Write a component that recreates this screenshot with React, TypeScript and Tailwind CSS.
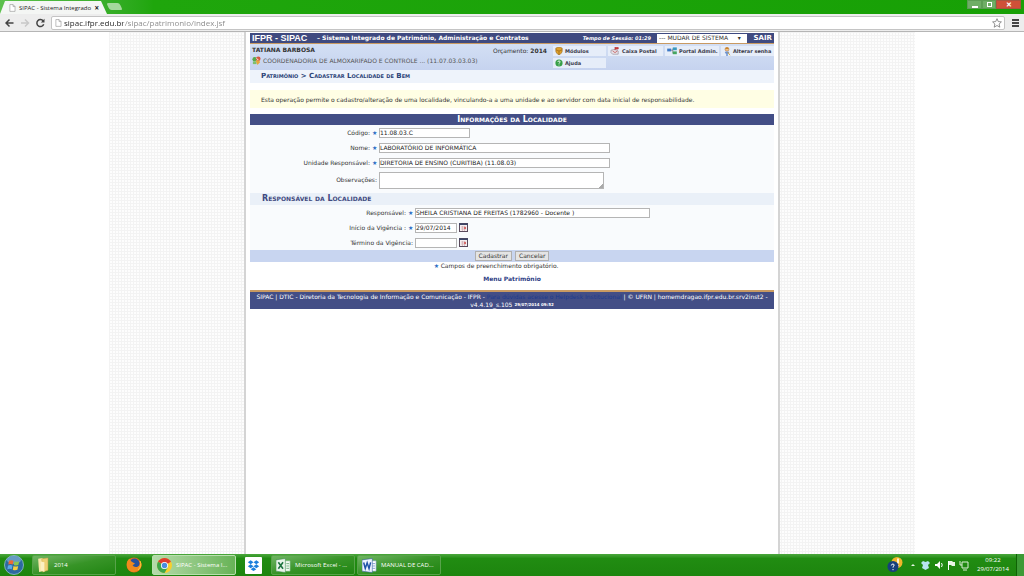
import type { ReactNode } from "react";

const Page = () => (
  <svg viewBox="0 0 8 10" className="h-2 w-[7px] shrink-0" fill="#fff" stroke="#999" strokeWidth="0.8">
    <path d="M.7.7h4l2.5 2.5v6H.7zM4.7.7v2.5h2.5" />
  </svg>
);

const Required = () => <span className="mx-[2px] w-[5px] text-center text-[6px] leading-[8px] text-[#2f6fc4]">★</span>;

const Calendar = () => (
  <svg viewBox="0 0 9 9" className="h-[9px] w-[9px]">
    <rect x="0.5" y="0.5" width="8" height="8" fill="#f6eef0" stroke="#5a4a5c" />
    <path d="M0 1.2h9" stroke="#3c4668" strokeWidth="1.6" />
    <path d="M2 4h5M2 6h5M3.5 3v5M5.5 3v5" stroke="#c9a3a8" strokeWidth="0.6" />
    <path d="M5 4h2v2H5z" fill="#d86a6a" />
  </svg>
);

const ShieldIcon = () => (
  <svg viewBox="0 0 10 10" className="h-2 w-2 shrink-0">
    <path d="M5 0l4 1.3v4Q9 8 5 10 1 8 1 5.300v-4z" fill="#e0a12a" stroke="#8a5b14" strokeWidth="0.6" />
    <path d="M1 3.500l4 1.500 4-1.500M5 5v5" stroke="#8a5b14" fill="none" strokeWidth="0.7" />
  </svg>
);
const MailIcon = () => (
  <svg viewBox="0 0 12 10" className="h-2 w-[10px] shrink-0">
    <path d="M1 4l5-1 4 2v4H3L1 7z" fill="#e8e4ea" stroke="#8a7d88" strokeWidth="0.7" />
    <path d="M6 0v4M6 .5h4v2H6" fill="#d9383a" stroke="#b33636" strokeWidth="0.9" />
    <path d="M3 5l3 2 3-2" fill="none" stroke="#c24747" strokeWidth="0.9" />
  </svg>
);
const PortalIcon = () => (
  <svg viewBox="0 0 12 10" className="h-2 w-[10px] shrink-0">
    <path d="M4 4h3M7 2v6" stroke="#666" strokeWidth="0.8" />
    <rect x="0" y="2" width="5" height="3.500" fill="#3d79c6" />
    <rect x="7" y="0.500" width="5" height="3.500" fill="#3a9ac0" />
    <rect x="7" y="5.500" width="5" height="3.500" fill="#45a560" />
  </svg>
);
const KeyUserIcon = () => (
  <svg viewBox="0 0 10 12" className="h-[9px] w-2 shrink-0">
    <circle cx="5" cy="3" r="2.600" fill="#f0c28a" stroke="#b7702a" strokeWidth="0.7" />
    <path d="M2.500 2.500Q5-1 7.500 2.500" fill="#c98428" />
    <path d="M3 6h4l1 2-2 1v3H4V9L2 8z" fill="#6e93cf" />
    <path d="M6 7l3 4" stroke="#d6a32d" strokeWidth="1.200" />
  </svg>
);
const HelpIcon = () => (
  <svg viewBox="0 0 10 10" className="h-2 w-2 shrink-0">
    <circle cx="5" cy="5" r="4.500" fill="#38a048" />
    <path d="M3.500 3.800Q3.700 2.300 5.100 2.400 6.800 2.600 6.300 4 5.900 4.700 5 5.200v.8M5 7v1" fill="none" stroke="#fff" strokeWidth="1.100" />
  </svg>
);
const UnitIcon = () => (
  <svg viewBox="0 0 10 10" className="h-[9px] w-[9px] shrink-0">
    <circle cx="3" cy="3.500" r="2.500" fill="#58a84c" />
    <circle cx="7" cy="3" r="2.500" fill="#d8573d" />
    <path d="M1 6h4v3H1z" fill="#7fbf6d" />
    <path d="M4 5h4l1 2-3 3z" fill="#e8a53a" />
    <path d="M5 2.500l2 2" stroke="#fff" />
  </svg>
);

const FolderIcon = () => (
  <svg viewBox="0 0 14 18" className="h-4 w-[13px] shrink-0">
    <path d="M1 2l5-1v15l-4 1z" fill="#f7e7a8" />
    <path d="M5 2l7-1v14l-6 2z" fill="#edcf73" stroke="#c9a546" strokeWidth="0.500" />
    <path d="M4 5l4 1v11l-4-2z" fill="#fbf0c2" />
  </svg>
);
const ChromeIcon = () => (
  <svg viewBox="0 0 16 16" className="h-[15px] w-[15px] shrink-0">
    <circle cx="8" cy="8" r="8" fill="#f6cf2f" />
    <path d="M8 8L1.100 4A8 8 0 0 1 14.900 4z" fill="#df3e30" />
    <path d="M8 8L1.100 4A8 8 0 0 0 8 16l3.500-6z" fill="#3da64b" />
    <circle cx="8" cy="8" r="3.800" fill="#fff" />
    <circle cx="8" cy="8" r="2.900" fill="#4a8de0" />
  </svg>
);
const FirefoxIcon = () => (
  <svg viewBox="0 0 16 16" className="h-4 w-4">
    <circle cx="8" cy="8" r="7.500" fill="#e2691b" />
    <circle cx="8.500" cy="6.500" r="5" fill="#27529d" />
    <path d="M1 5Q2 2 4 1.500 4 4 7 5.500L9 6.500Q7 8 6.500 8 8 11 12 9.500 15 8 14 3.500 17 8 14 12 10 16.500 5 14.500 0 12 1 5z" fill="#f08a1e" />
    <path d="M14 4q2.200 5-2 9" stroke="#fbc93a" fill="none" />
  </svg>
);
const DropboxIcon = () => (
  <svg viewBox="0 0 18 18" className="h-[17px] w-[17px]">
    <rect width="18" height="18" rx="1" fill="#fff" />
    <path d="M6 3.500L3 5.600l3 2.100 3-2.100zM12 3.500L9 5.600l3 2.100 3-2.100zM6 7.700L3 9.800l3 2.100 3-2.100zM12 7.700L9 9.800l3 2.100 3-2.100zM9 10.900l-3 2 3 2 3-2z" fill="#1c7fdc" />
  </svg>
);
const ExcelIcon = () => (
  <svg viewBox="0 0 16 16" className="h-[15px] w-[15px] shrink-0">
    <path d="M7 3h8v11H7z" fill="#f4fbf4" stroke="#8bbf94" strokeWidth="0.600" />
    <path d="M11 6h3M11 8.500h3M11 11h3" stroke="#72b080" />
    <path d="M0 2l10-1.500v15L0 14z" fill="#e9f5ea" stroke="#3f8a50" strokeWidth="0.600" />
    <path d="M2.500 4.500l5 7M7.500 4.500l-5 7" stroke="#1f7340" strokeWidth="1.700" />
  </svg>
);
const WordIcon = () => (
  <svg viewBox="0 0 16 16" className="h-[15px] w-[15px] shrink-0">
    <path d="M7 3h8v11H7z" fill="#fff" stroke="#8aa5d0" strokeWidth="0.600" />
    <path d="M11 6h3M11 8.500h3M11 11h3" stroke="#7b9ad0" />
    <path d="M0 2l11-1.500v15L0 14z" fill="#eef4ff" stroke="#2b5797" strokeWidth="0.600" />
    <path d="M1.800 4.800l1.700 6.400 2-6 2 6L9.200 4.600" fill="none" stroke="#1f52a8" strokeWidth="1.600" />
  </svg>
);
const StartIcon = () => (
  <svg viewBox="0 0 20 20" className="h-5 w-5">
    <circle cx="10" cy="10" r="9.500" fill="#2c6aa0" stroke="#a9cfe0" strokeWidth="0.700" />
    <ellipse cx="10" cy="5" rx="7" ry="4" fill="#7fb2d2" opacity="0.700" />
    <path d="M5 5.800q2.500-1.300 4.500 0l-.8 3.800q-2-1.200-4.400 0z" fill="#ee6a33" />
    <path d="M10.500 6.200q2.300 1.200 4.700 0l-.8 3.800q-2.500 1-4.600-.1z" fill="#8cc84a" />
    <path d="M4 10.600q2.500-1.200 4.500 0l-.8 3.700q-2-1.200-4.400 0z" fill="#5aa9e8" />
    <path d="M9.500 11q2.300 1.200 4.700 0l-.8 3.800q-2.500 1-4.600-.1z" fill="#f8cf3c" />
  </svg>
);

function Row({ label, id, required, wide, children, tall }: { label: string; id: string; required?: boolean; wide?: boolean; tall?: boolean; children: ReactNode }) {
  return (
    <div className={tall ? "flex h-[20px] items-center" : "flex h-[15px] items-center"}>
      <div className={wide ? "flex w-[165px] items-center justify-end" : "flex w-[129px] items-center justify-end"}>
        <label htmlFor={id}>{label}</label>
        {required ? <Required /> : <span className="w-[2px]" />}
      </div>
      {children}
    </div>
  );
}

const field = "h-[10px] border border-[#b5b5b5] bg-white px-0 text-[6px] leading-[8px] text-[#222] outline-none";

function TaskItem({ icon, text, active }: { icon: ReactNode; text: string; active?: boolean }) {
  return (
    <button
      className={
        active
          ? "flex h-5 w-[84px] items-center gap-1 rounded-xs border border-[#b9dfae] bg-linear-to-r from-[#b5dbaa] to-[#67b356] px-[4px] text-white"
          : "flex h-5 w-[84px] items-center gap-1 rounded-xs border border-[#58a34a] bg-linear-to-br from-[#6fb562] via-[#379427] to-[#1f8510] px-[4px] text-white"
      }
    >
      {icon}
      <span className="whitespace-nowrap">{text}</span>
    </button>
  );
}

function Shortcut({ icon, text }: { icon: ReactNode; text: string }) {
  return (
    <a href="#" className="flex h-[10px] items-center gap-[2px] bg-[#e6edf9] pl-[2px] text-[5px] font-bold whitespace-nowrap text-[#3a3a4a]">
      {icon}
      {text}
    </a>
  );
}

export default function App() {
  return (
    <div className="flex min-h-screen flex-col bg-white font-['DejaVu_Sans',sans-serif] text-[6px] leading-[8px] text-[#333]">
      <header className="font-['Open_Sans',sans-serif]">
        <div className="flex h-[14px] items-end bg-linear-to-r from-[#5cc04c] via-[#1fa60c] via-15% to-[#17a005]">
          <div className="flex h-[13px] w-[107px] items-center gap-[3px] bg-[#f4f6f4] pr-2 pl-[9px] text-[6px] text-[#222] [clip-path:polygon(5px_0,101px_0,100%_100%,0_100%)]">
            <Page />
            <span className="flex-1 whitespace-nowrap">SIPAC - Sistema Integrado</span>
            <button aria-label="Fechar guia" className="text-[8px] font-bold">×</button>
          </div>
          <button aria-label="Nova guia" className="mb-[4px] ml-px h-[7px] w-[13px] skew-x-[25deg] rounded-xs bg-[#a5d89c]" />
          <div className="ml-auto flex self-start pr-[3px] text-[7px] leading-[8px] font-bold text-white">
            <button aria-label="Minimizar" className="flex h-[9px] w-[15px] items-center justify-center border border-[#5d9c55] bg-[#6fae66]">
              <span className="mt-1 h-[2px] w-[6px] bg-white" />
            </button>
            <button aria-label="Restaurar" className="flex h-[9px] w-[14px] items-center justify-center border border-[#5d9c55] bg-[#6fae66]">
              <span className="h-[5px] w-[5px] border border-white" />
            </button>
            <button aria-label="Fechar" className="flex h-[9px] w-[25px] items-center justify-center border border-[#a85440] bg-[#cf5038]">✕</button>
          </div>
        </div>
        <div className="flex h-[18px] items-center border-b border-[#b5b5b5] bg-[#ededed] px-[5px]">
          <svg viewBox="0 0 42 10" className="h-[10px] w-[42px]" fill="none" strokeWidth="1.500">
            <path d="M8.500 5H1M4.500 1.500L1 5l3.500 3.500" stroke="#444" />
            <path d="M16 5h7.500M20 1.500L23.500 5 20 8.500" stroke="#c8c8c8" />
            <path d="M38.200 3A3.500 3.500 0 1 0 38.700 6.200" stroke="#444" />
            <path d="M39.500.8v3.700h-3.700z" fill="#444" stroke="none" />
          </svg>
          <div className="ml-1 flex h-[14px] flex-1 items-center gap-[2px] rounded-xs border border-[#c4c4c4] bg-white pl-[3px]">
            <Page />
            <input
              aria-label="Endereço"
              defaultValue="sipac.ifpr.edu.br/sipac/patrimonio/index.jsf"
              className="h-3 min-w-0 flex-1 bg-linear-to-r from-[#222] from-[59px] to-[#888] to-[59px] bg-clip-text text-[8px] text-transparent outline-none"
            />
            <svg viewBox="0 0 10 10" className="mr-[2px] h-[10px] w-[10px]" fill="#fff" stroke="#777" strokeWidth="0.800">
              <path d="M5 .7l1.300 2.900 3.100.3-2.300 2.100.7 3.200L5 7.500 2.200 9.200l.7-3.200L.6 3.900l3.100-.3z" />
            </svg>
          </div>
          <button aria-label="Menu" className="ml-[7px] flex w-[7px] flex-col gap-px">
            <span className="h-[2px] bg-[#444]" />
            <span className="h-[2px] bg-[#444]" />
            <span className="h-[2px] bg-[#444]" />
          </button>
        </div>
      </header>

      <div className="mx-auto flex w-full max-w-[806px] flex-1 bg-[#fdfdfd] bg-[linear-gradient(#f3f3f3_1px,transparent_1px),linear-gradient(90deg,#f3f3f3_1px,transparent_1px)] bg-[size:3px_3px]">
        <main className="mx-auto w-full max-w-[536px] border-x-2 border-[#d4d4d4] bg-white px-1 pt-px">
          <div className="flex h-[11px] items-center border-b border-[#c99a62] bg-[#3f4a80] pl-[2px] text-white">
            <h1 className="w-[65px] font-['Liberation_Sans',sans-serif] text-[9px] font-bold whitespace-nowrap">IFPR - SIPAC</h1>
            <span className="text-[6px] font-bold whitespace-nowrap">– Sistema Integrado de Patrimônio, Administração e Contratos</span>
            <span className="mr-[6px] ml-auto text-[5px] font-bold whitespace-nowrap italic">Tempo de Sessão: 01:29</span>
            <select aria-label="Mudar de sistema" className="h-[9px] w-[90px] appearance-none bg-white pl-[2px] text-[6px] text-[#333]">
              <option>--- MUDAR DE SISTEMA &nbsp; &nbsp; ▾</option>
            </select>
            <a href="#" className="w-[27px] pr-[2px] text-right text-[7px] font-bold">SAIR</a>
          </div>

          <section className="flex h-[26px] justify-between bg-linear-to-b from-[#d3dff4] to-[#c6d3ef] pt-[2px] pl-[2px]">
            <div>
              <p className="text-[6px] font-bold">TATIANA BARBOSA</p>
              <p className="flex items-center gap-[2px] pt-[2px] text-[6px] whitespace-nowrap text-[#555]">
                <UnitIcon />
                COORDENADORIA DE ALMOXARIFADO E CONTROLE ... (11.07.03.03.03)
              </p>
            </div>
            <div className="flex gap-[6px]">
              <p className="pt-px text-[6px] whitespace-nowrap">
                Orçamento: <b>2014</b>
              </p>
              <nav className="grid grid-cols-[53px_55px_54px_53px] content-start gap-x-[2px] gap-y-[2px]">
                <Shortcut icon={<ShieldIcon />} text="Módulos" />
                <Shortcut icon={<MailIcon />} text="Caixa Postal" />
                <Shortcut icon={<PortalIcon />} text="Portal Admin." />
                <Shortcut icon={<KeyUserIcon />} text="Alterar senha" />
                <Shortcut icon={<HelpIcon />} text="Ajuda" />
              </nav>
            </div>
          </section>

          <h2 className="h-[13px] bg-[#eef3fb] pl-[11px] text-[7px] leading-[13px] font-bold text-[#2c4478] [font-variant:small-caps]">
            Patrimônio &gt; Cadastrar Localidade de Bem
          </h2>

          <p className="mt-[7px] h-[18px] bg-[#fffee4] pl-[11px] text-[6px] leading-[19px]">
            Esta operação permite o cadastro/alteração de uma localidade, vinculando-a a uma unidade e ao servidor com data inicial de responsabilidade.
          </p>

          <form className="mt-[6px]">
            <h3 className="h-[11px] bg-[#434e86] text-center text-[8px] leading-[11px] font-bold text-white [font-variant:small-caps]">Informações da Localidade</h3>
            <div className="bg-[#f9fbfd]">
              <Row label="Código:" id="codigo" required>
                <input id="codigo" defaultValue="11.08.03.C" className={field + " w-[91px]"} />
              </Row>
              <Row label="Nome:" id="nome" required>
                <input id="nome" defaultValue="LABORATÓRIO DE INFORMÁTICA" className={field + " w-[231px]"} />
              </Row>
              <Row label="Unidade Responsável:" id="unidade" required>
                <input id="unidade" defaultValue="DIRETORIA DE ENSINO (CURITIBA) (11.08.03)" className={field + " w-[231px]"} />
              </Row>
              <Row label="Observações:" id="obs" tall>
                <textarea id="obs" className="h-[17px] w-[225px] resize-none border border-[#b5b5b5] bg-white bg-linear-[135deg] from-white from-98% to-[#aaa] to-98%" />
              </Row>
              <h4 className="mt-[3px] h-[12px] bg-[#eaf0f8] pl-3 text-[8px] leading-[11px] font-bold text-[#3f4a80] [font-variant:small-caps]">Responsável da Localidade</h4>
              <Row label="Responsável:" id="resp" required wide>
                <input id="resp" defaultValue="SHEILA CRISTIANA DE FREITAS (1782960 - Docente )" className={field + " w-[235px]"} />
              </Row>
              <Row label="Início da Vigência :" id="inicio" required wide>
                <input id="inicio" defaultValue="29/07/2014" className={field + " w-[42px]"} />
                <button type="button" aria-label="Escolher data de início" className="ml-[2px]"><Calendar /></button>
              </Row>
              <Row label="Término da Vigência:" id="termino" wide>
                <input id="termino" className={field + " w-[42px]"} />
                <button type="button" aria-label="Escolher data de término" className="ml-[2px]"><Calendar /></button>
              </Row>
            </div>
            <div className="flex h-[12px] items-center justify-center gap-[3px] bg-[#c8d5f0]">
              <button type="button" className="h-[10px] border border-[#b0b0b0] bg-[#e4e4e4] px-[3px] text-[6px]">Cadastrar</button>
              <button type="button" className="h-[10px] border border-[#b0b0b0] bg-[#e4e4e4] px-[3px] text-[6px]">Cancelar</button>
            </div>
          </form>

          <p className="mr-[34px] flex items-center justify-center text-[6px]">
            <Required />
            Campos de preenchimento obrigatório.
          </p>
          <p className="mt-[5px] text-center">
            <a href="#" className="text-[6px] font-bold text-[#2f3f85]">Menu Patrimônio</a>
          </p>

          <footer className="mt-[7px] border-t-2 border-[#c99a62] bg-[#434e86] pt-px text-center text-[6px] leading-[8px] text-white">
            <p>
              SIPAC | DTIC - Diretoria da Tecnologia de Informação e Comunicação - IFPR -{" "}
              <a href="#" className="text-[#1d3a8c]">Para dúvidas acesse o Helpdesk Institucional</a> | © UFRN | homemdragao.ifpr.edu.br.srv2inst2 -
            </p>
            <p className="flex items-center justify-center gap-[2px]">
              v4.4.19_s.105 <small className="text-[4px] leading-[8px] font-bold">29/07/2014 09:52</small>
            </p>
          </footer>
        </main>
      </div>

      <nav aria-label="Barra de tarefas" className="flex h-[22px] items-center bg-linear-to-b from-[#4ba83c] via-[#218c12] via-20% to-[#1d850e] pl-1 font-['Open_Sans',sans-serif] text-[6px] text-white">
        <button aria-label="Iniciar" className="mr-2"><StartIcon /></button>
        <TaskItem icon={<FolderIcon />} text="2014" />
        <button aria-label="Firefox" className="mx-[10px]"><FirefoxIcon /></button>
        <TaskItem icon={<ChromeIcon />} text="SIPAC - Sistema I..." active />
        <button aria-label="Dropbox" className="mx-[9px]"><DropboxIcon /></button>
        <div className="flex gap-[2px]">
          <TaskItem icon={<ExcelIcon />} text="Microsoft Excel - ..." />
          <TaskItem icon={<WordIcon />} text="MANUAL DE CAD..." />
        </div>
        <div className="ml-auto flex items-center">
          <svg viewBox="0 0 86 18" className="mr-[6px] h-[18px] w-[86px]">
            <circle cx="13" cy="6.500" r="5.500" fill="#f0b62a" />
            <path d="M14 2.500v5M14 9v1.500" stroke="#fff" strokeWidth="1.600" />
            <circle cx="9" cy="10.500" r="5.500" fill="#173f7c" />
            <path d="M7.300 9.500q.2-1.600 1.800-1.500 1.700.4.700 2-.8.700-.8 1.600M9 13v1.200" stroke="#fff" fill="none" />
            <path d="M27 10l2-2 2 2z" fill="#e8f5e5" />
            <path d="M37 7l2-2L41.500 6 44 5l2 2-2 2 1 3-3.500 2-3.500-2 1-3z" fill="#b7e4ee" />
            <path d="M51 8h2l3-3v8l-3-3h-2z" fill="#fff" />
            <path d="M57.500 7q1.500 2 0 4" stroke="#fff" fill="none" />
            <path d="M64.500 5v9" stroke="#fff" />
            <path d="M65 5h3l1 1h2v4h-3l-1-1h-2z" fill="#e8f5e5" />
            <path d="M78 6h6v6h-6zM79 14h4M76 5v4h2" fill="none" stroke="#dcefd8" />
          </svg>
          <time className="w-[34px] text-center leading-[9px]">09:22<br />29/07/2014</time>
          <button aria-label="Mostrar área de trabalho" className="ml-[6px] h-[22px] w-2 border-l border-[#0f6204] bg-[#3c9a35]" />
        </div>
      </nav>
    </div>
  );
}
